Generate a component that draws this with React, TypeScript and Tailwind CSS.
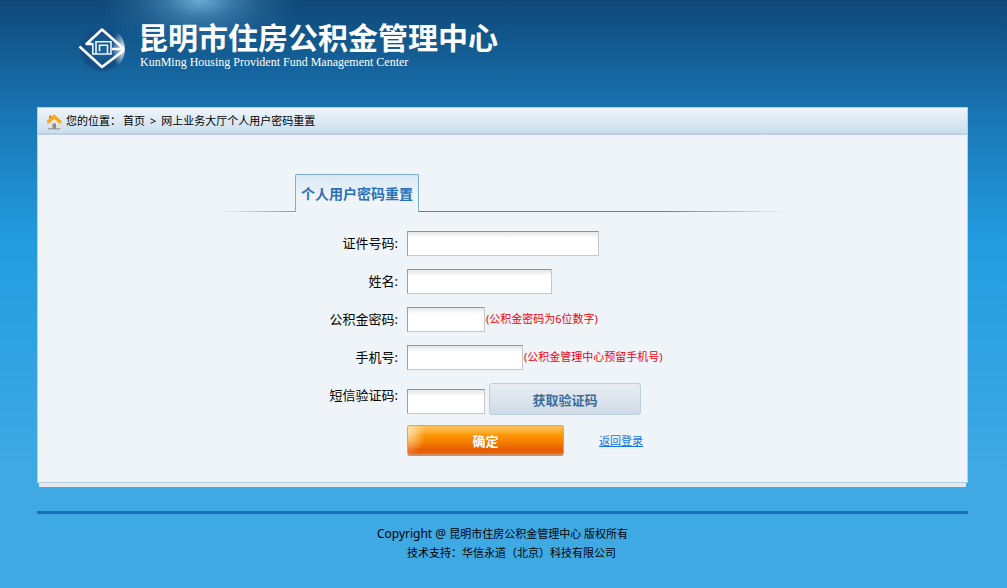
import React, { useState } from 'react';

interface FieldRowProps {
  id: string;
  label: string;
  children: React.ReactNode;
}

const inputClass =
  'h-[25px] border border-t-[#929292] border-l-[#a0a0a0] border-r-[#c6c6c6] border-b-[#c6c6c6] bg-white bg-linear-to-b from-[#e6e6e6] to-white to-[6px] px-1 text-[13px] outline-none';

const FieldRow: React.FC<FieldRowProps> = ({ id, label, children }) => (
  <div className="flex items-start">
    <label htmlFor={id} className="w-[183px] shrink-0 mr-[9px] text-right text-[13px] leading-6">
      {label}
    </label>
    {children}
  </div>
);

const Logo: React.FC = () => (
  <svg className="w-12 h-12 shrink-0" viewBox="0 0 48 48" fill="none">
    <defs>
      <radialGradient id="logo-ball" cx="0.5" cy="0.5" r="0.5">
        <stop offset="0" stopColor="#1d629f" />
        <stop offset="0.8" stopColor="#124d83" />
        <stop offset="1" stopColor="#124d83" stopOpacity="0.3" />
      </radialGradient>
      <radialGradient id="logo-shine" cx="0.75" cy="0.5" r="0.6">
        <stop offset="0" stopColor="#fff" stopOpacity="0.9" />
        <stop offset="1" stopColor="#fff" stopOpacity="0" />
      </radialGradient>
      <clipPath id="logo-clip">
        <circle cx="24" cy="25" r="23" />
      </clipPath>
    </defs>
    <circle cx="24" cy="25" r="23" fill="url(#logo-ball)" />
    <ellipse cx="40" cy="25" rx="9" ry="16" fill="url(#logo-shine)" clipPath="url(#logo-clip)" />
    <path d="M15 20H8.500L24 5.500l21 18.500v3L24 43 1.500 22.500M34 25h11" stroke="#fff" strokeWidth="2.600" strokeLinejoin="round" />
    <path d="M14.800 19v11H33V17.800H18V30M21.500 27.500v-6.300h8V30" stroke="#eef5fa" strokeWidth="1.600" />
  </svg>
);

const HomeIcon: React.FC = () => (
  <svg className="w-4 h-4 shrink-0" viewBox="0 0 16 16">
    <path d="M3 7h10.500v8H3z" fill="#e3e2de" />
    <path d="M2 14h12.500v1.500H2z" fill="#a9a8a2" />
    <path d="M6.500 9.500h3.500V15H6.500z" fill="#938b80" />
    <path d="M3 1.500h2.500v4H3z" fill="#d98a1c" />
    <path d="M8.200 0.200L0.500 7.200l1.300 2.600 1.700-.8 4.700-4.200 4.700 4.200 1.700.8 1-2.600z" fill="#fba61a" />
    <path d="M8.200 4.800L5 7.700h6.500z" fill="#fbe9c4" />
  </svg>
);

const Header: React.FC = () => (
  <header className="h-[107px] pl-[78px] pt-6 flex items-start bg-[radial-gradient(ellipse_100px_52px_at_200px_0px,#6aabd4_0%,#5a9ecb80_35%,#5a9ecb2e_65%,#5a9ecb00_100%)]">
    <Logo />
    <div className="ml-3 text-white whitespace-nowrap">
      <h1 className="text-[30px] leading-7 font-bold">昆明市住房公积金管理中心</h1>
      <p className="mt-[3px] pl-0.5 font-['Liberation_Serif',serif] text-[12px] leading-[14px]">
        KunMing Housing Provident Fund Management Center
      </p>
    </div>
  </header>
);

const Breadcrumb: React.FC = () => (
  <nav className="h-[27px] pl-2 pt-0.5 flex items-center text-[11px] border-b-2 border-[#c1cfdc] bg-linear-to-b from-[#eff5fb] to-[#cbdeee]">
    <HomeIcon />
    <span className="ml-1">您的位置：</span>
    <span className="ml-0.5">首页</span>
    <span className="mx-[5px]">&gt;</span>
    <span>网上业务大厅个人用户密码重置</span>
  </nav>
);

const ResetForm: React.FC = () => {
  const [form, setForm] = useState({ idNumber: '', name: '', password: '', phone: '', smsCode: '' });

  const handleChange = (e: React.ChangeEvent<HTMLInputElement>) => {
    setForm({ ...form, [e.target.name]: e.target.value });
  };

  return (
    <form className="w-[575px] mx-auto pt-[39px]" onSubmit={(e) => e.preventDefault()}>
      <div className="flex items-end mb-[19px]">
        <div className="w-20 h-px bg-[linear-gradient(to_right,#eff4f9,#6da4c6)]" />
        <h2 className="w-[124px] h-[38px] border border-b-0 border-[#7fadc9] rounded-t-xs bg-linear-to-b from-[#d9e8f4] to-[#eff4f9] to-60% text-center text-[14px] leading-[38px] font-bold text-[#2a6fb8]">
          个人用户密码重置
        </h2>
        <div className="flex-1 h-px bg-[linear-gradient(to_right,#4289b8_65%,#eff4f9)]" />
      </div>

      <div className="flex flex-col gap-[13px]">
        <FieldRow id="idNumber" label="证件号码:">
          <input id="idNumber" name="idNumber" className={`${inputClass} w-48`} value={form.idNumber} onChange={handleChange} />
        </FieldRow>
        <FieldRow id="name" label="姓名:">
          <input id="name" name="name" className={`${inputClass} w-[145px]`} value={form.name} onChange={handleChange} />
        </FieldRow>
        <FieldRow id="password" label="公积金密码:">
          <input id="password" name="password" type="password" className={`${inputClass} w-[78px]`} value={form.password} onChange={handleChange} />
          <span className="ml-px text-[11px] leading-6 text-[#f00010]">(公积金密码为6位数字)</span>
        </FieldRow>
        <FieldRow id="phone" label="手机号:">
          <input id="phone" name="phone" className={`${inputClass} w-[116px]`} value={form.phone} onChange={handleChange} />
          <span className="ml-px text-[11px] leading-6 text-[#f00010]">(公积金管理中心预留手机号)</span>
        </FieldRow>
        <FieldRow id="smsCode" label="短信验证码:">
          <div className="flex items-end gap-1">
            <input id="smsCode" name="smsCode" className={`${inputClass} mb-px w-[78px]`} value={form.smsCode} onChange={handleChange} />
            <button type="button" className="w-[152px] h-8 pt-[3px] rounded-[3px] border border-[#bccfe0] bg-linear-to-b from-[#e7edf3] to-[#d0dbe6] text-[13px] font-bold text-[#3a6c9a]">
              获取验证码
            </button>
          </div>
        </FieldRow>
      </div>

      <div className="mt-[10px] ml-48 flex items-center gap-[35px]">
        <button
          type="submit"
          className="w-[157px] h-[31px] pt-[3px] rounded-[3px] border border-[#e2a15c] border-b-2 border-b-[#d08e66] bg-[radial-gradient(ellipse_18px_24px_at_0px_6px,#ffedc8cc,#ffedc800),linear-gradient(to_bottom,#fec15a_0%,#fdab2e_22%,#fb9600_32%,#f57c00_60%,#e65a00_85%,#ec6a0c_100%)] text-[13px] font-bold text-white"
        >
          确定
        </button>
        <a href="#login" className="pt-0.5 text-[11px] text-[#1273e6] underline">返回登录</a>
      </div>
    </form>
  );
};

const Footer: React.FC = () => (
  <footer className="mt-6 border-t-3 border-[#176fb9] pt-[10px] text-center text-[11px] leading-[19px]">
    <p>
      <span className="text-[12px]">Copyright @ </span>
      昆明市住房公积金管理中心 版权所有
    </p>
    <p className="pl-[18px]">技术支持：华信永道（北京）科技有限公司</p>
  </footer>
);

const App: React.FC = () => {
  return (
    <div className="min-h-screen font-['Noto_Sans','Noto_Sans_CJK_SC',sans-serif] text-black bg-[#3fa9e4] bg-[linear-gradient(to_bottom,#0f4878_0px,#1974b2_110px,#229cdf_240px,#3fa9e4_470px)]">
      <Header />
      <div className="pl-[37px] pr-[39px] pb-6">
        <main className="min-h-[376px] pb-[26px] border border-[#b4d0e4] bg-[#eff4f9]">
          <Breadcrumb />
          <ResetForm />
        </main>
        <div className="mx-[2px] h-1 bg-[#e6e8ea]" />
        <Footer />
      </div>
    </div>
  );
};

export default App;
